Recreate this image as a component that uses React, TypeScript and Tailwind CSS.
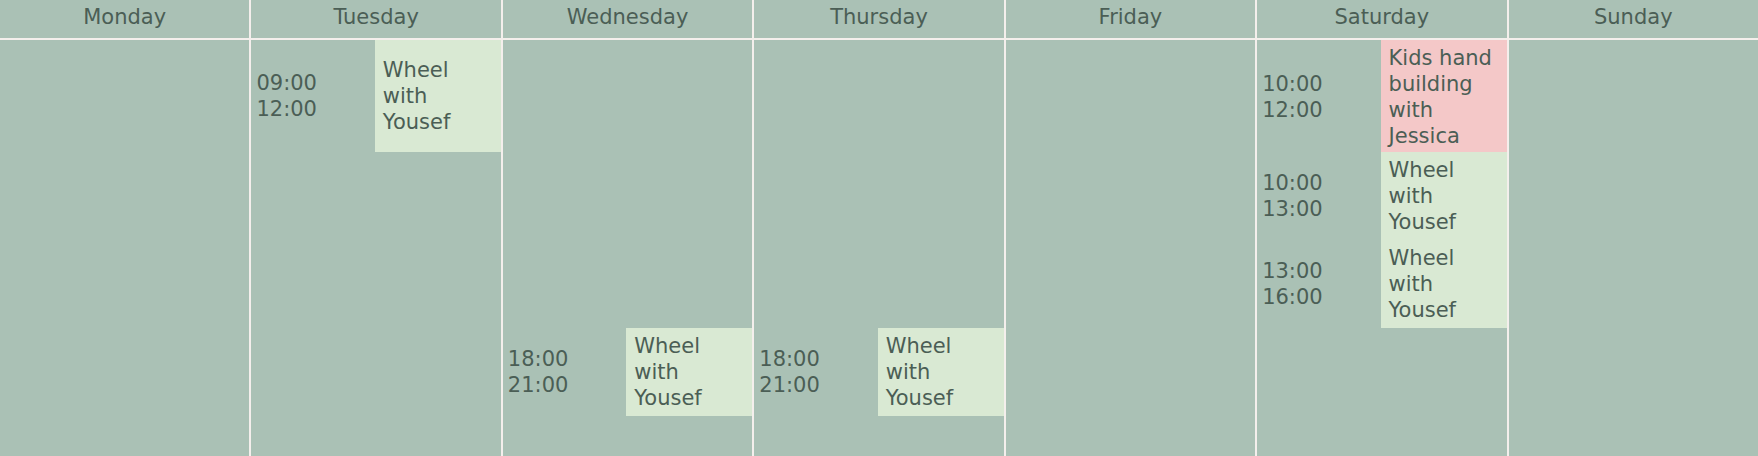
type Slot = { from: string; to: string; lines: string[]; kind: "wheel" | "kids" }

const wheel = ["Wheel", "with", "Yousef"]

const days: { name: string; slots: (Slot | null)[] }[] = [
  { name: "Monday", slots: [null, null, null, null] },
  {
    name: "Tuesday",
    slots: [{ from: "09:00", to: "12:00", lines: wheel, kind: "wheel" }, null, null, null],
  },
  {
    name: "Wednesday",
    slots: [null, null, null, { from: "18:00", to: "21:00", lines: wheel, kind: "wheel" }],
  },
  {
    name: "Thursday",
    slots: [null, null, null, { from: "18:00", to: "21:00", lines: wheel, kind: "wheel" }],
  },
  { name: "Friday", slots: [null, null, null, null] },
  {
    name: "Saturday",
    slots: [
      { from: "10:00", to: "12:00", lines: ["Kids hand", "building", "with", "Jessica"], kind: "kids" },
      { from: "10:00", to: "13:00", lines: wheel, kind: "wheel" },
      { from: "13:00", to: "16:00", lines: wheel, kind: "wheel" },
      null,
    ],
  },
  { name: "Sunday", slots: [null, null, null, null] },
]

function SlotRow({ slot }: { slot: Slot | null }) {
  if (!slot) return <div />
  return (
    <div className="grid grid-cols-[1fr_126px]">
      <div className="flex flex-col justify-center pl-[5px]">
        <span>{slot.from}</span>
        <span>{slot.to}</span>
      </div>
      <div
        className={
          "flex flex-col justify-center pl-2 pr-1 py-[5px] " +
          (slot.kind === "kids" ? "bg-[#f4c8c8]" : "bg-[#d9e9d3]")
        }
      >
        {slot.lines.map((l) => (
          <span key={l}>{l}</span>
        ))}
      </div>
    </div>
  )
}

export default function App() {
  return (
    <div
      className="grid grid-cols-7 gap-x-[2px] bg-[#f4efec] h-screen text-[21px] leading-[26px] text-[#4b5e55]"
      style={{ fontFamily: '"DejaVu Sans", Verdana, sans-serif' }}
    >
      {days.map((d) => (
        <div key={d.name} className="flex flex-col bg-[#aac1b5]">
          <div className="h-[40px] pt-[2px] text-center border-b-2 border-[#f4efec] leading-normal">
            {d.name}
          </div>
          <div className="grid grid-rows-[112px_88px_88px_88px]">
            {d.slots.map((s, i) => (
              <SlotRow key={i} slot={s} />
            ))}
          </div>
        </div>
      ))}
    </div>
  )
}
